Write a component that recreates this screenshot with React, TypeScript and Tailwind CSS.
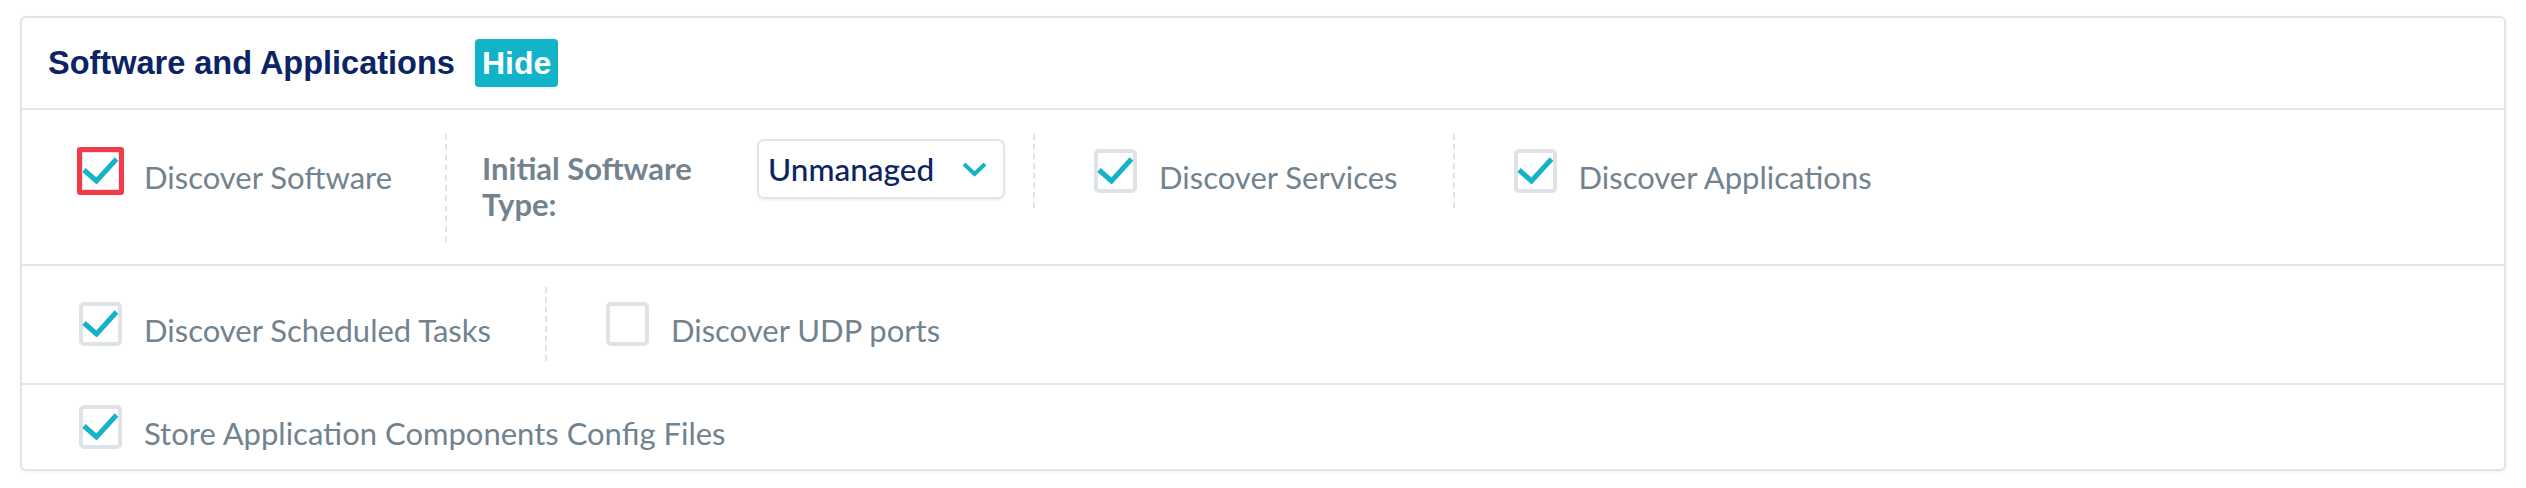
import React from "react";

function Check({ checked, focused }: { checked: boolean; focused?: boolean }) {
  return (
    <div className="relative w-[43px] h-[44px] shrink-0 rounded-[5px] border-4 border-[#dfe3e8] bg-white">
      {checked && (
        <svg
          className="absolute left-[-4px] top-[-4px] overflow-visible"
          width="43"
          height="44"
          viewBox="0 0 43 44"
        >
          <path d="M5 21 L17.5 32 L37.5 10" fill="none" stroke="#14b3c7" strokeWidth="5" />
        </svg>
      )}
      {focused && (
        <div className="absolute -inset-[6px] rounded-[3px] border-[5px] border-[#f23a4a]" />
      )}
    </div>
  );
}

function CheckItem({
  label,
  checked,
  focused,
  divider,
  pr = "pr-[54px]",
}: {
  label: string;
  checked: boolean;
  focused?: boolean;
  divider?: boolean;
  pr?: string;
}) {
  return (
    <div
      className={
        "flex items-center h-[74px] " +
        pr +
        (divider ? " border-l-2 border-dashed border-[#e1e4e8] pl-[59px]" : "")
      }
    >
      <Check checked={checked} focused={focused} />
      <span className="ml-[22px] mt-[11px] text-[31px] leading-[36px] text-[#72838f] whitespace-nowrap">
        {label}
      </span>
    </div>
  );
}

export default function App() {
  return (
    <div className="w-[2526px] h-[488px] bg-white pt-[16px] px-[20px] font-['Lato','Liberation_Sans',sans-serif]">
      <div className="rounded-[6px] border-2 border-[#e2e4e7] bg-white shadow-[0_1px_3px_rgba(0,0,0,0.06)]">
        {/* Header */}
        <div className="h-[92px] flex items-center pl-[26px] gap-[20px] border-b-2 border-[#e2e5e9]">
          <h2 className="font-['Liberation_Sans',sans-serif] font-bold text-[32.5px] leading-none text-[#0b2463]">
            Software and Applications
          </h2>
          <span className="h-[48px] px-[7px] flex items-center rounded-[4px] bg-[#10b3c7] text-white font-['Liberation_Sans',sans-serif] font-bold text-[32px] leading-none">
            Hide
          </span>
        </div>

        {/* Row 1 */}
        <div className="flex items-start pl-[57px] pt-[24px] pb-[22px] border-b-2 border-[#e2e5e9]">
          <CheckItem label="Discover Software" checked focused pr="pr-[53px]" />
          <div className="flex items-start border-l-2 border-dashed border-[#e1e4e8] pl-[35px] pr-[28px] pt-[5px] pb-[20px]">
            <div className="w-[240px] mr-[35px] mt-[11px] font-bold text-[31px] leading-[36px] text-[#72838f]">
              Initial Software Type:
            </div>
            <div className="w-[248px] h-[60px] rounded-[7px] border-2 border-[#e3e5e8] shadow-[0_1px_3px_rgba(0,0,0,0.08)] flex items-center justify-between pl-[9px] pr-[16px]">
              <span className="text-[31.5px] leading-[36px] text-[#0b2463] font-medium">Unmanaged</span>
              <svg width="25" height="15" viewBox="0 0 25 15">
                <path d="M2 2 L12.5 12 L23 2" fill="none" stroke="#14b3c7" strokeWidth="4" />
              </svg>
            </div>
          </div>
          <CheckItem label="Discover Services" checked divider pr="pr-[55px]" />
          <CheckItem label="Discover Applications" checked divider />
        </div>

        {/* Row 2 */}
        <div className="flex items-start pl-[57px] pt-[21px] pb-[22px] border-b-2 border-[#e2e5e9]">
          <CheckItem label="Discover Scheduled Tasks" checked />
          <CheckItem label="Discover UDP ports" checked={false} divider />
        </div>

        {/* Row 3 */}
        <div className="flex items-start pl-[57px] py-[5px]">
          <CheckItem label="Store Application Components Config Files" checked />
        </div>
      </div>
    </div>
  );
}
